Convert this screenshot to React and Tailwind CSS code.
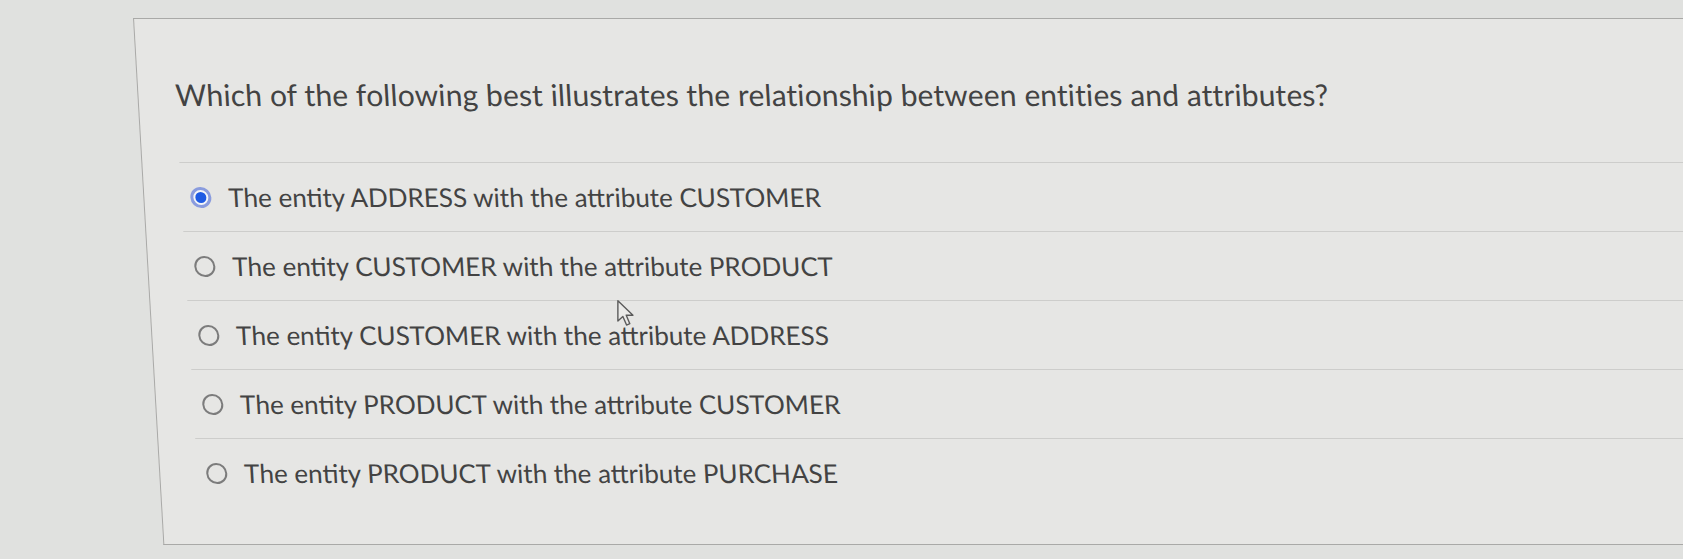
const options = [
  'The entity ADDRESS with the attribute CUSTOMER',
  'The entity CUSTOMER with the attribute PRODUCT',
  'The entity CUSTOMER with the attribute ADDRESS',
  'The entity PRODUCT with the attribute CUSTOMER',
  'The entity PRODUCT with the attribute PURCHASE',
];

function Radio({ checked }) {
  if (checked) {
    return (
      <span className="flex h-[21px] w-[21px] flex-shrink-0 items-center justify-center rounded-full border-[3px] border-[#8a9cde] bg-[#f4f5f8]">
        <span className="h-[11px] w-[11px] rounded-full bg-[#1f5be3]" />
      </span>
    );
  }
  return <span className="h-[21px] w-[21px] flex-shrink-0 rounded-full border-2 border-[#7c7c7c]" />;
}

function Pointer() {
  return (
    <svg
      className="pointer-events-none absolute left-[616px] top-[299px]"
      width="20"
      height="29"
      viewBox="0 0 17 25"
      fill="none"
    >
      <path
        d="M1.5 1.5 L1.5 19 L5.8 15 L9 22.5 L11.8 21.3 L8.7 14 L14.5 14 Z"
        fill="#eaeae8"
        stroke="#5a5a5a"
        strokeWidth="1.2"
        strokeLinejoin="round"
      />
    </svg>
  );
}

export default function App() {
  return (
    <div className="relative h-[559px] w-[1683px] overflow-hidden bg-[#e0e1df] pt-[18px] font-[Lato,sans-serif] text-[#434343]">
      {/* question card, sheared to follow the photo's perspective */}
      <div className="ml-[133px] h-[527px] w-[1620px] origin-top-left skew-x-[3.3deg] border-y border-l border-[#a9a9a7] bg-[#e6e6e4] pl-[37px] pt-[57px]">
        <h2 className="text-[30px] leading-[36px] tracking-[0.12px]">
          Which of the following best illustrates the relationship between entities and attributes?
        </h2>

        <div className="mt-[50px]">
          {options.map((label, i) => (
            <label
              key={label}
              className="flex h-[69px] items-center gap-[17px] border-t border-[#cdcdcb] pl-[9px]"
            >
              <Radio checked={i === 0} />
              <span className="text-[26px] leading-[31px]">{label}</span>
            </label>
          ))}
        </div>
      </div>

      <Pointer />
    </div>
  );
}
